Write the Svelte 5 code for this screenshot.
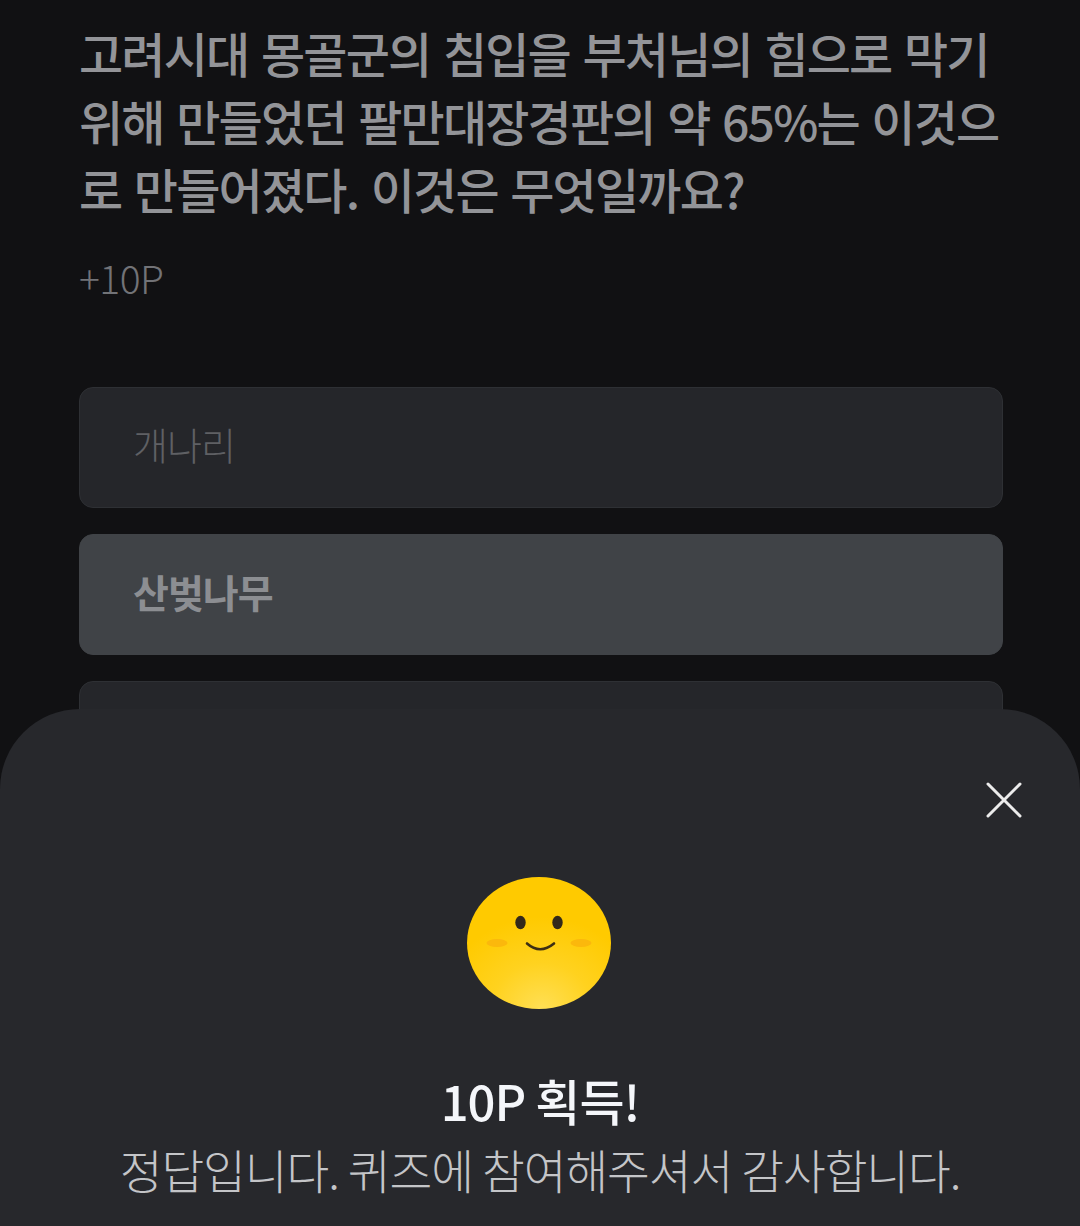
<script>
    const question = [
        "고려시대 몽골군의 침입을 부처님의 힘으로 막기",
        "위해 만들었던 팔만대장경판의 약 65%는 이것으",
        "로 만들어졌다. 이것은 무엇일까요?",
    ];
    const answers = [
        { label: "개나리", picked: false },
        { label: "산벚나무", picked: true },
        { label: "소나무", picked: false },
    ];
</script>

<main>
    <h1>
        {#each question as line}
            <span>{line}</span>
        {/each}
    </h1>
    <p class="points">+10P</p>
    <div class="answers">
        {#each answers as a}
            <div class="answer" class:picked={a.picked}>{a.label}</div>
        {/each}
    </div>

    <section class="sheet">
        <button class="close" aria-label="닫기">
            <svg width="38" height="38" viewBox="0 0 38 38">
                <path d="M3 3 L35 35 M35 3 L3 35" stroke="#ececec" stroke-width="3" stroke-linecap="round" fill="none" />
            </svg>
        </button>
        <svg class="smile" width="144" height="134" viewBox="0 0 144 134">
            <defs>
                <radialGradient id="face" cx="0.52" cy="1" r="0.7">
                    <stop offset="0" stop-color="#ffdf55" />
                    <stop offset="0.5" stop-color="#ffd21f" />
                    <stop offset="1" stop-color="#ffca00" />
                </radialGradient>
            </defs>
            <ellipse cx="72" cy="66" rx="72" ry="66" fill="url(#face)" />
            <ellipse cx="30" cy="66" rx="10.5" ry="4" fill="#fbb80c" />
            <ellipse cx="114" cy="66" rx="10.5" ry="4" fill="#fbb80c" />
            <ellipse cx="53.500" cy="45.500" rx="5.200" ry="6.800" fill="#33291a" />
            <ellipse cx="90.500" cy="45.500" rx="5.200" ry="6.800" fill="#33291a" />
            <path d="M60 66.500 Q73 78 87 66.500" stroke="#3d2f14" stroke-width="2.600" stroke-linecap="round" fill="none" />
        </svg>
        <h2>10P 획득!</h2>
        <p class="thanks">정답입니다. 퀴즈에 참여해주셔서 감사합니다.</p>
    </section>
</main>

<style>
    :global(body) {
        margin: 0;
        background: #111113;
    }
    main {
        position: relative;
        height: 1226px;
        overflow: hidden;
        padding: 18px 77px 0 79px;
        box-sizing: border-box;
        background: #111113;
        font-family: "Noto Sans CJK KR", "Noto Sans", sans-serif;
    }
    h1 {
        margin: 0;
        font-size: 48px;
        font-weight: 500;
        line-height: 68px;
        letter-spacing: -1.8px;
        word-spacing: 3.5px;
        color: #939498;
    }
    h1 span {
        display: block;
        white-space: nowrap;
    }
    .points {
        margin: 31px 0 0;
        font-size: 39px;
        font-weight: 300;
        line-height: 48px;
        letter-spacing: -0.5px;
        color: #727377;
    }
    .answers {
        display: flex;
        flex-direction: column;
        gap: 26px;
        margin-top: 86px;
    }
    .answer {
        height: 121px;
        box-sizing: border-box;
        padding: 0 0 8px 53px;
        display: flex;
        align-items: center;
        border: 1px solid #2e3034;
        border-radius: 14px;
        background: #25262a;
        font-size: 38px;
        font-weight: 300;
        letter-spacing: -1px;
        color: #5f6064;
    }
    .answer.picked {
        border-color: #404347;
        background: #404347;
        font-size: 39px;
        font-weight: 700;
        color: #8c8e92;
    }
    .sheet {
        position: absolute;
        left: 0;
        right: 0;
        top: 709px;
        bottom: 0;
        display: flex;
        flex-direction: column;
        align-items: center;
        border-radius: 80px 80px 0 0;
        background: #27282c;
    }
    .close {
        position: absolute;
        top: 72px;
        right: 57px;
        width: 38px;
        height: 38px;
        padding: 0;
        border: 0;
        background: none;
    }
    .close svg {
        display: block;
    }
    .smile {
        display: block;
        margin-top: 168px;
        margin-left: -3px;
    }
    h2 {
        margin: 56px 0 0;
        font-size: 49px;
        font-weight: 500;
        line-height: 66px;
        letter-spacing: -1px;
        color: #f4f6fa;
    }
    .thanks {
        margin: 3px 0 0;
        font-size: 46.5px;
        font-weight: 300;
        line-height: 66px;
        letter-spacing: -1.1px;
        color: #c4c5c8;
        white-space: nowrap;
    }
</style>
